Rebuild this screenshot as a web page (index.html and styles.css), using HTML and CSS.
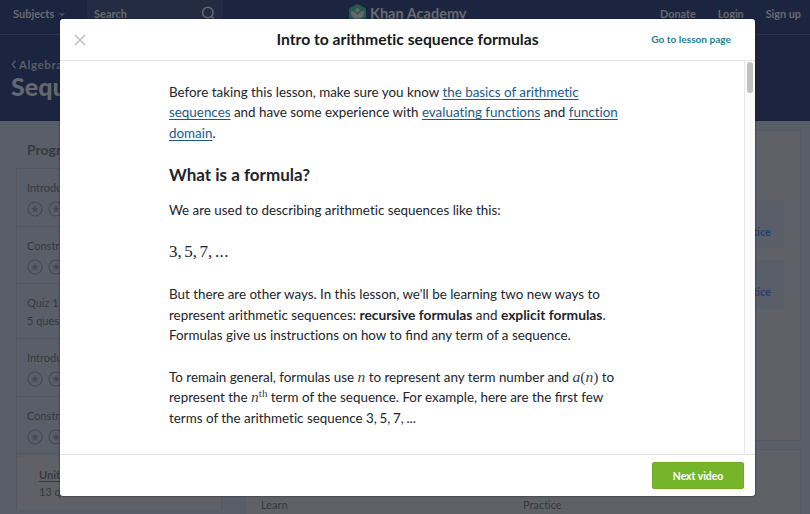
FILE: index.html
```html
<!DOCTYPE html>
<html lang="en">
<head>
<meta charset="utf-8">
<title>Intro to arithmetic sequence formulas</title>
<link rel="stylesheet" href="styles.css">
</head>
<body>
<svg class="defs" width="0" height="0"><symbol id="star" viewBox="0 0 16 16"><circle cx="8" cy="8" r="7" fill="none" stroke="currentColor" stroke-width="1.2"/><path d="M8 4.3l1.1 2.4 2.6.3-1.9 1.7.5 2.6L8 10l-2.300 1.300.5-2.600L4.300 7l2.600-.3z" fill="currentColor"/></symbol></svg>
<div class="page">
  <header class="topbar">
    <span class="subjects">Subjects</span><i class="caret"></i>
    <div class="search"><span>Search</span><svg width="16" height="16" viewBox="0 0 16 16" fill="none" stroke="currentColor" stroke-width="1.5"><circle cx="6.800" cy="6.500" r="5.200"/><path d="M10.500 10.500l3.700 3.700"/></svg></div>
    <div class="brand"><svg width="19" height="20" viewBox="0 0 19 20"><path d="M8.200.5q1.300-.7 2.600 0l6 3.400q1.200.7 1.200 2v7.600q0 1.300-1.200 2l-6 3.400q-1.300.7-2.600 0l-6-3.400Q1 14.800 1 13.500V5.900q0-1.300 1.200-2z" fill="#23594f"/><circle cx="9.500" cy="6.200" r="2.100" fill="#65676d"/><path d="M3 7q5 .2 6.500 4.500Q11 7.200 16 7q.3 8-6.500 8.400Q2.700 15 3 7z" fill="#65676d"/></svg><span>Khan Academy</span></div>
    <nav><span>Donate</span><span>Login</span><span>Sign up</span></nav>
  </header>
  <section class="hero">
    <div class="crumb"><svg width="6" height="9" viewBox="0 0 6 9" fill="none" stroke="currentColor" stroke-width="1.300"><path d="M4.500.8L1.300 4.500l3.200 3.700"/></svg><span>Algebra</span></div>
    <h1>Sequences</h1>
  </section>
  <main class="columns">
    <aside>
      <h2>Progress</h2>
      <div class="lessons">
        <div class="lesson"><span>Introduction</span><div class="stars"><svg><use href="#star"/></svg><svg><use href="#star"/></svg></div></div>
        <div class="lesson"><span>Constructing</span><div class="stars"><svg><use href="#star"/></svg><svg><use href="#star"/></svg></div></div>
        <div class="lesson quiz"><span>Quiz 1</span><span>5 questions</span></div>
        <div class="lesson"><span>Introduction</span><div class="stars"><svg><use href="#star"/></svg><svg><use href="#star"/></svg></div></div>
        <div class="lesson"><span>Constructing</span><div class="stars"><svg><use href="#star"/></svg><svg><use href="#star"/></svg></div></div>
        <div class="unit"><b>Unit test</b><span>13 questions</span></div>
      </div>
    </aside>
    <div class="cards">
      <div class="card first"><div class="practice">Practice</div><div class="practice">Practice</div></div>
      <div class="card second"><span>Learn</span><span>Practice</span></div>
    </div>
  </main>
</div>
<div class="modal" role="dialog">
  <div class="modal-head">
    <svg class="close" width="12" height="12" viewBox="0 0 12 12" stroke="#b4b6ba" stroke-width="1.300"><path d="M1 1l10 10M11 1L1 11"/></svg>
    <h2>Intro to arithmetic sequence formulas</h2>
    <a class="lesson-link">Go to lesson page</a>
  </div>
  <div class="modal-body">
    <article>
      <p>Before taking this lesson, make sure you know <a>the basics of arithmetic<br>sequences</a> and have some experience with <a>evaluating functions</a> and <a>function<br>domain</a>.</p>
      <h3>What is a formula?</h3>
      <p>We are used to describing arithmetic sequences like this:</p>
      <p class="formula">3, 5, 7, <span class="dots">...</span></p>
      <p>But there are other ways. In this lesson, we'll be learning two new ways to<br>represent arithmetic sequences: <b>recursive formulas</b> and <b>explicit formulas</b>.<br>Formulas give us instructions on how to <span class="lig">find</span> any term of a sequence.</p>
      <p>To remain general, formulas use <span class="math"><i>n</i></span> to represent any term number and <span class="math"><i>a</i>(<i>n</i>)</span> to<br>represent the <span class="math"><i>n</i><sup>th</sup></span> term of the sequence. For example, here are the <span class="lig">first</span> few<br>terms of the arithmetic sequence <span class="terms">3, 5, 7, ...</span></p>
    </article>
    <div class="track"><div class="thumb"></div></div>
  </div>
  <div class="modal-foot"><button>Next video</button></div>
</div>
</body>
</html>
```
FILE: styles.css
```css
* { box-sizing: border-box; }
body { margin: 0; width: 810px; height: 514px; overflow: hidden; font-family: Lato, sans-serif; font-variant-ligatures: none; background: #5a5e68; }
h1, h2, h3, p { margin: 0; }
.defs { position: absolute; }
.page { height: 514px; overflow: hidden; color: #363940; }
.topbar { height: 35px; background: #1b2540; border-bottom: 1px solid #2b3449; display: flex; color: #696b70; font-size: 11px; font-weight: 700; line-height: 16px; }
.subjects { margin: 6px 0 0 13px; width: 42px; }
.caret { margin: 13px 0 0 4px; width: 6px; height: 4px; background: #43495a; clip-path: polygon(0 0, 100% 0, 50% 100%); }
.search { margin-left: 22px; width: 136px; background: #232c42; padding: 6px 6px 0 7px; display: flex; justify-content: space-between; }
.brand { display: flex; gap: 3px; margin: 4px 0 0 125px; width: 122px; font-size: 14.5px; line-height: 20px; white-space: nowrap; }
nav { display: flex; gap: 22px; margin: 6px 9px 0 auto; font-size: 10.800px; white-space: nowrap; }
.hero { height: 86px; background: #1b2540; color: #65676d; padding: 21px 0 0 11px; border-bottom: 1px solid #17213c; }
.crumb { display: flex; align-items: center; gap: 2px; font-size: 11.5px; font-weight: 700; letter-spacing: .6px; line-height: 17px; color: #595d67; }
h1 { font-size: 25px; font-weight: 900; line-height: 26px; }
.columns { display: flex; gap: 23px; height: 393px; }
aside { margin-left: 16px; width: 206px; padding-top: 20px; }
aside h2 { font-size: 14px; line-height: 18px; margin: 0 0 9px 11px; }
.lessons { border: 1px solid #535760; border-bottom: 0; }
.lesson { height: 57.600px; border-bottom: 1px solid #535760; padding: 11px 0 0 10px; font-size: 11px; line-height: 16px; display: flex; flex-direction: column; }
.quiz { height: 55px; }
.quiz span + span { margin-top: 2px; }
.stars { display: flex; gap: 5px; margin-top: 5px; color: #474a52; }
.stars svg { width: 16px; height: 16px; }
.unit { display: flex; flex-direction: column; font-size: 11px; line-height: 17px; background: #606166; border-top: 3px solid #5a5e66; padding: 9px 0 0 22px; height: 56px; }
.unit b { text-decoration: underline; text-underline-offset: 2px; }
.cards { width: 556px; padding-top: 9px; display: flex; flex-direction: column; gap: 8px; }
.card { background: #606166; border: 1px solid #565961; flex: none; }
.first { height: 311px; padding: 69px 16px 0 16px; display: flex; flex-direction: column; gap: 11px; }
.practice { height: 49px; background: #595e69; color: #263d75; font-weight: 700; font-size: 11px; line-height: 16px; padding: 24px 13px 0; text-align: right; }
.second { height: 80px; padding: 48px 15px 0; display: grid; grid-template-columns: 262px 1fr; font-size: 11px; line-height: 14px; }
.modal { position: absolute; left: 60px; top: 19px; width: 695px; height: 477px; background: #fff; border-radius: 3px; box-shadow: 0 0 2px #10182d; display: flex; flex-direction: column; overflow: hidden; color: #21242c; }
.modal-head { height: 42px; flex: none; border-bottom: 1px solid #e3e4e5; display: grid; grid-template-columns: 148px 1fr 148px; align-items: center; }
.close { margin-left: 14px; }
.modal-head h2 { font-size: 15.7px; line-height: 20px; margin-bottom: 2px; text-align: center; color: #171920; white-space: nowrap; }
.lesson-link { color: #1b7f95; font-size: 10.1px; font-weight: 700; text-align: right; margin: 0 24px 2px 0; white-space: nowrap; }
.modal-body { flex: 1; min-height: 0; display: flex; justify-content: space-between; }
article { margin-left: 109px; padding-top: 21px; font-size: 13.4px; line-height: 20.4px; white-space: nowrap; }
article p { margin-bottom: 21.400px; }
article p a { color: #1a5a89; text-decoration: underline; text-underline-offset: 2px; text-decoration-thickness: 1px; }
article b { font-size: 13.8px; line-height: 0; }
.lig { font-variant-ligatures: common-ligatures; }
h3 { font-size: 17px; line-height: 22px; margin: -1px 0 14px; }
article .formula { font-family: "Liberation Serif", serif; font-size: 17px; word-spacing: -1.700px; padding-top: 1px; }
.dots { letter-spacing: .4px; }
.math { font-family: "Liberation Serif", serif; font-size: 15.5px; line-height: 0; color: #3b3e46; }
sup { font-size: 11px; line-height: 0; vertical-align: 5px; }
.terms { word-spacing: -.8px; }
.track { width: 11px; background: #fafafa; border-left: 1px solid #e8e8e8; padding: 1px 2px; }
.thumb { width: 6px; height: 31px; background: #c1c1c1; border-radius: 3px; }
.modal-foot { height: 42px; flex: none; border-top: 1px solid #e3e4e5; display: flex; justify-content: flex-end; padding: 7px 11px 0 0; }
button { width: 92px; height: 27px; border: 1px solid #6cae21; border-radius: 2px; background: #76b52a; color: #fff; font: 700 10.400px Lato, sans-serif; padding: 0; }
```
